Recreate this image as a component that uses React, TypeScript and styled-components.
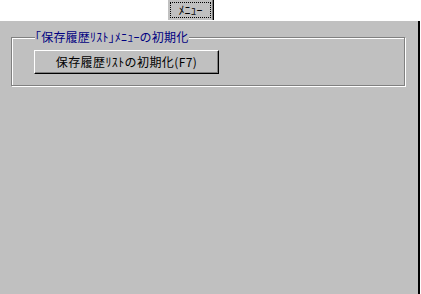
import styled, { createGlobalStyle } from "styled-components"

const Global = createGlobalStyle`
    html, body {
        margin: 0;
        padding: 0;
        background: #ffffff;
    }
    * {
        box-sizing: border-box;
    }
`

const Screen = styled.div`
    width: 421px;
    height: 294px;
    display: flex;
    flex-direction: column;
    background: #ffffff;
    font-family: "Noto Sans CJK JP", "DejaVu Sans", sans-serif;
    font-size: 12px;
    overflow: hidden;
`

const TabStrip = styled.div`
    height: 21px;
    display: flex;
    align-items: flex-start;
    padding-left: 167px;
`

const Tab = styled.div`
    width: 47px;
    height: 20px;
    padding: 2px;
    background: #c0c0c0;
    border-left: 1px solid #ffffff;
    border-right: 1px solid #000000;
    box-shadow: inset -1px 0 0 #808080;
`

const Focus = styled.div`
    height: 100%;
    display: flex;
    align-items: center;
    justify-content: center;
    border: 1px dotted #000000;
    font-size: 12px;
    line-height: 1;
    color: #000000;
`

const Panel = styled.div`
    flex: 1;
    width: 420px;
    background: #c0c0c0;
    border-right: 2px solid #000000;
    padding: 9px 13px 0 11px;
`

const Group = styled.fieldset`
    margin: 0;
    height: 56px;
    padding: 6px 0 0 22px;
    border: 1px solid #808080;
    box-shadow: inset 1px 1px 0 #ffffff, 1px 1px 0 #ffffff;
`

const Legend = styled.legend`
    padding: 0 1px 0 0;
    margin-left: 1px;
    color: #000080;
    font-size: 12px;
    line-height: 14px;
    letter-spacing: 0.2px;
    background: #c0c0c0;
`

const ResetButton = styled.button`
    width: 185px;
    height: 24px;
    padding: 0;
    background: #c0c0c0;
    border: 1px solid;
    border-color: #ffffff #000000 #000000 #ffffff;
    box-shadow: inset -1px -1px 0 #808080;
    font-family: inherit;
    font-size: 12px;
    line-height: 1;
    letter-spacing: 0.4px;
    color: #000000;
    cursor: default;
`

export default function App() {
    return (
        <>
            <Global />
            <Screen>
                <TabStrip>
                    <Tab>
                        <Focus>ﾒﾆｭｰ</Focus>
                    </Tab>
                </TabStrip>
                <Panel>
                    <Group>
                        <Legend>｢保存履歴ﾘｽﾄ｣ﾒﾆｭｰの初期化</Legend>
                        <ResetButton>保存履歴ﾘｽﾄの初期化(F7)</ResetButton>
                    </Group>
                </Panel>
            </Screen>
        </>
    )
}
